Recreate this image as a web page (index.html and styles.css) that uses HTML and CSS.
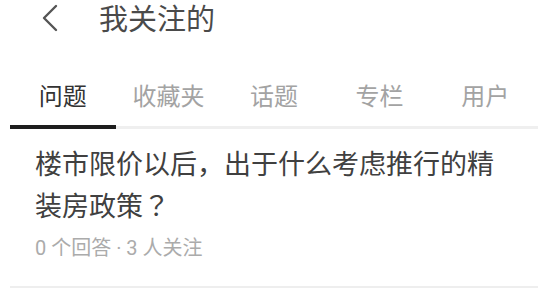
FILE: index.html
```html
<!DOCTYPE html>
<html lang="zh-CN">
<head>
<meta charset="utf-8">
<title>我关注的</title>
<link rel="stylesheet" href="styles.css">
</head>
<body>
<div class="page">
  <header class="topbar">
    <svg class="back" viewBox="0 0 16 28" width="16" height="28" aria-hidden="true">
      <polyline points="14,2 2,14 14,26" fill="none" stroke="#555" stroke-width="2.4" stroke-linecap="round" stroke-linejoin="round"/>
    </svg>
    <h1 class="title">我关注的</h1>
  </header>
  <nav class="tabs">
    <div class="tab active">问题</div>
    <div class="tab">收藏夹</div>
    <div class="tab">话题</div>
    <div class="tab">专栏</div>
    <div class="tab">用户</div>
  </nav>
  <div class="item">
    <div class="question">楼市限价以后，出于什么考虑推行的精装房政策<span class="qmark" lang="zh-TW">？</span></div>
    <div class="meta">0 个回答 · 3 人关注</div>
  </div>
</div>
</body>
</html>
```
FILE: styles.css
```css
html, body {
  margin: 0;
  padding: 0;
  background: #fff;
}
body {
  font-family: "Noto Sans CJK SC", "Noto Sans", sans-serif;
}
.page {
  width: 550px;
  height: 296px;
  overflow: hidden;
}
.topbar {
  display: flex;
  align-items: flex-start;
  height: 40px;
  padding-left: 42px;
}
.back {
  margin-top: 4px;
  flex: none;
}
.title {
  margin: 0 0 0 41px;
  font-size: 29px;
  font-weight: 400;
  line-height: 36px;
  margin-top: -1px;
  color: #4a4a4a;
}
.tabs {
  display: flex;
  margin: 0 12px 0 10px;
  border-bottom: 3px solid #efefef;
}
.tab {
  flex: 1;
  text-align: center;
  font-size: 24px;
  line-height: 40px;
  padding: 35px 0 10px;
  color: #a3a3a3;
  border-bottom: 4px solid transparent;
  margin-bottom: -3px;
}
.tab.active {
  color: #333;
  border-bottom-color: #1e1e1e;
}
.item {
  margin: 0 12px 0 10px;
  padding: 13px 25px 25px;
  border-bottom: 2px solid #eeeeee;
}
.question {
  font-size: 27px;
  line-height: 42px;
  color: #404040;
}
.qmark {
  font-family: "Noto Sans CJK TC", "Noto Sans CJK SC", sans-serif;
}
.meta {
  margin-top: 9px;
  font-family: "Roboto", "Noto Sans CJK SC", sans-serif;
  font-size: 20px;
  line-height: 26px;
  color: #ababab;
}
```
